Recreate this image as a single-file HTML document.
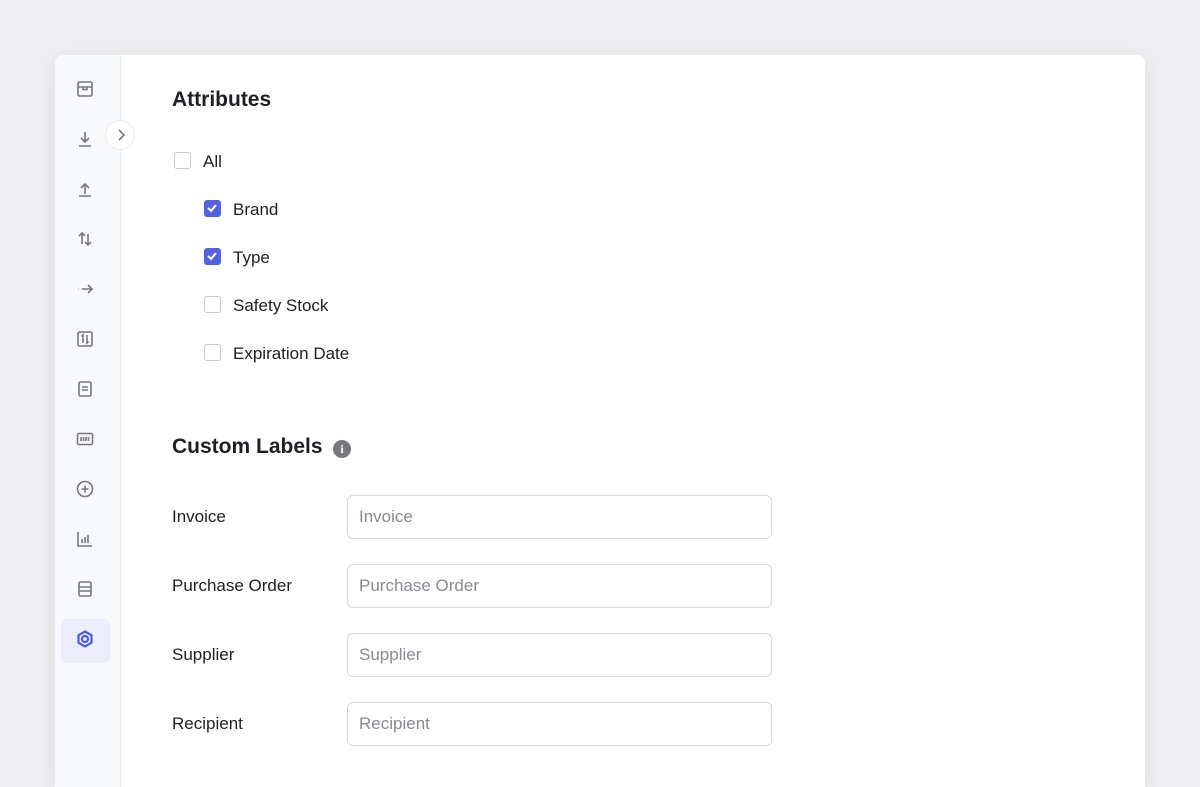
<!DOCTYPE html>
<html><head><meta charset="utf-8"><style>
*{box-sizing:border-box;margin:0;padding:0}
html,body{width:1200px;height:787px;overflow:hidden}
body{background:#efeff1;font-family:"Liberation Sans",sans-serif;position:relative;color:#1f1f24}
.card{position:absolute;left:55px;top:55px;width:1090px;height:732px;background:#fff;border-radius:8px 8px 0 0;box-shadow:0 4px 24px rgba(0,0,0,.08);overflow:hidden}
.side{position:absolute;left:0;top:0;width:66px;height:100%;background:#f8f9fc;border-right:1px solid #ebebef}
.ic{position:absolute;left:20px;width:20px;height:20px}
.act{position:absolute;left:6px;top:564px;width:49px;height:44px;background:#ecedfb;border-radius:6px}
.tog{position:absolute;left:50px;top:65px;width:30px;height:30px;border-radius:50%;background:#fff;border:1px solid #ececf0}
.t{position:absolute;font-size:21px;font-weight:bold;color:#1f1f24}
.cb{position:absolute;width:17px;height:17px;border:1.5px solid #c9c9cf;border-radius:3px;background:#fff}
.cb.on{background:#5262e2;border-color:#5262e2}
.lab{position:absolute;font-size:17px;color:#1f1f24}
.inp{position:absolute;left:292px;width:425px;height:44px;border:1px solid #d8d8dd;border-radius:6px;font-size:17px;color:#8a8a92;padding:11px 0 0 11px}
</style></head><body>
<div class="card">
<div class="side">
<div class="act"></div>
<svg class="ic" style="top:24px" viewBox="0 0 20 20" fill="none" stroke="#77777f" stroke-width="1.6"><rect x="3" y="3" width="14" height="14" rx="1.5"/><path d="M3 8h14M8 8v2.5h4V8"/></svg>
<svg class="ic" style="top:74px" viewBox="0 0 20 20" fill="none" stroke="#77777f" stroke-width="1.6"><path d="M10 3v10M6 9l4 4 4-4M4 17h12"/></svg>
<svg class="ic" style="top:124px" viewBox="0 0 20 20" fill="none" stroke="#77777f" stroke-width="1.6"><path d="M10 15V5M6 9l4-4 4 4M4 17h12"/></svg>
<svg class="ic" style="top:174px" viewBox="0 0 20 20" fill="none" stroke="#77777f" stroke-width="1.6"><path d="M7 15V4M4 7l3-3 3 3M13 5v11M10 13l3 3 3-3"/></svg>
<svg class="ic" style="top:224px" viewBox="0 0 20 20" fill="none" stroke="#77777f" stroke-width="1.6"><path d="M3 10h.5M7 10h10M13 6l4 4-4 4"/></svg>
<svg class="ic" style="top:274px" viewBox="0 0 20 20" fill="none" stroke="#77777f" stroke-width="1.6"><rect x="3" y="3" width="14" height="14" rx="1.5"/><path d="M8 14V6L6.5 7.5M12 6v8l1.5-1.5"/></svg>
<svg class="ic" style="top:324px" viewBox="0 0 20 20" fill="none" stroke="#77777f" stroke-width="1.6"><rect x="4" y="3" width="12" height="14" rx="1.5"/><path d="M7 8h6M7 11h6"/></svg>
<svg class="ic" style="top:374px" viewBox="0 0 20 20" fill="none" stroke="#77777f" stroke-width="1.6"><rect x="2.5" y="4.5" width="15" height="11" rx="1.5"/><path d="M6 8v4M8.5 8v4M11 8v4M13.5 8v4"/></svg>
<svg class="ic" style="top:424px" viewBox="0 0 20 20" fill="none" stroke="#77777f" stroke-width="1.6"><circle cx="10" cy="10" r="7.5"/><path d="M10 6.5v7M6.5 10h7"/></svg>
<svg class="ic" style="top:474px" viewBox="0 0 20 20" fill="none" stroke="#77777f" stroke-width="1.6"><path d="M3 3v14h14M7 14v-4M10 14V8M13 14V6"/></svg>
<svg class="ic" style="top:524px" viewBox="0 0 20 20" fill="none" stroke="#77777f" stroke-width="1.6"><rect x="4" y="3" width="12" height="14" rx="1.5"/><path d="M4 8h12M4 12h12"/></svg>
<svg class="ic" style="top:574px" viewBox="0 0 20 20" fill="none" stroke="#4d5ee0" stroke-width="2.2"><path d="M10 2.5l6.5 3.75v7.5L10 17.5l-6.5-3.75v-7.5z"/><circle cx="10" cy="10" r="3" fill="#ecedfb"/></svg>
</div>
<div class="tog"><svg style="position:absolute;left:8px;top:7px" width="14" height="14" viewBox="0 0 14 14" fill="none" stroke="#77777f" stroke-width="1.6"><path d="M5 2l5 5-5 5"/></svg></div>

<div class="t" style="left:117px;top:33px">Attributes</div>
<div class="cb" style="left:119px;top:97px"></div><div class="lab" style="left:148px;top:97px">All</div>
<div class="cb on" style="left:149px;top:145px"><svg width="14" height="14" viewBox="0 0 14 14" fill="none" stroke="#fff" stroke-width="2"><path d="M3 7l3 3 5-6"/></svg></div><div class="lab" style="left:178px;top:145px">Brand</div>
<div class="cb on" style="left:149px;top:193px"><svg width="14" height="14" viewBox="0 0 14 14" fill="none" stroke="#fff" stroke-width="2"><path d="M3 7l3 3 5-6"/></svg></div><div class="lab" style="left:178px;top:193px">Type</div>
<div class="cb" style="left:149px;top:241px"></div><div class="lab" style="left:178px;top:241px">Safety Stock</div>
<div class="cb" style="left:149px;top:289px"></div><div class="lab" style="left:178px;top:289px">Expiration Date</div>

<div class="t" style="left:117px;top:380px">Custom Labels</div>
<div style="position:absolute;left:278px;top:385px;width:18px;height:18px;border-radius:50%;background:#77777f;color:#fff;font-size:12px;font-weight:bold;text-align:center;line-height:18px;font-family:'Liberation Serif',serif">i</div>

<div class="lab" style="left:117px;top:452px">Invoice</div><div class="inp" style="top:440px">Invoice</div>
<div class="lab" style="left:117px;top:521px">Purchase Order</div><div class="inp" style="top:509px">Purchase Order</div>
<div class="lab" style="left:117px;top:590px">Supplier</div><div class="inp" style="top:578px">Supplier</div>
<div class="lab" style="left:117px;top:659px">Recipient</div><div class="inp" style="top:647px">Recipient</div>
</div>
</body></html>
